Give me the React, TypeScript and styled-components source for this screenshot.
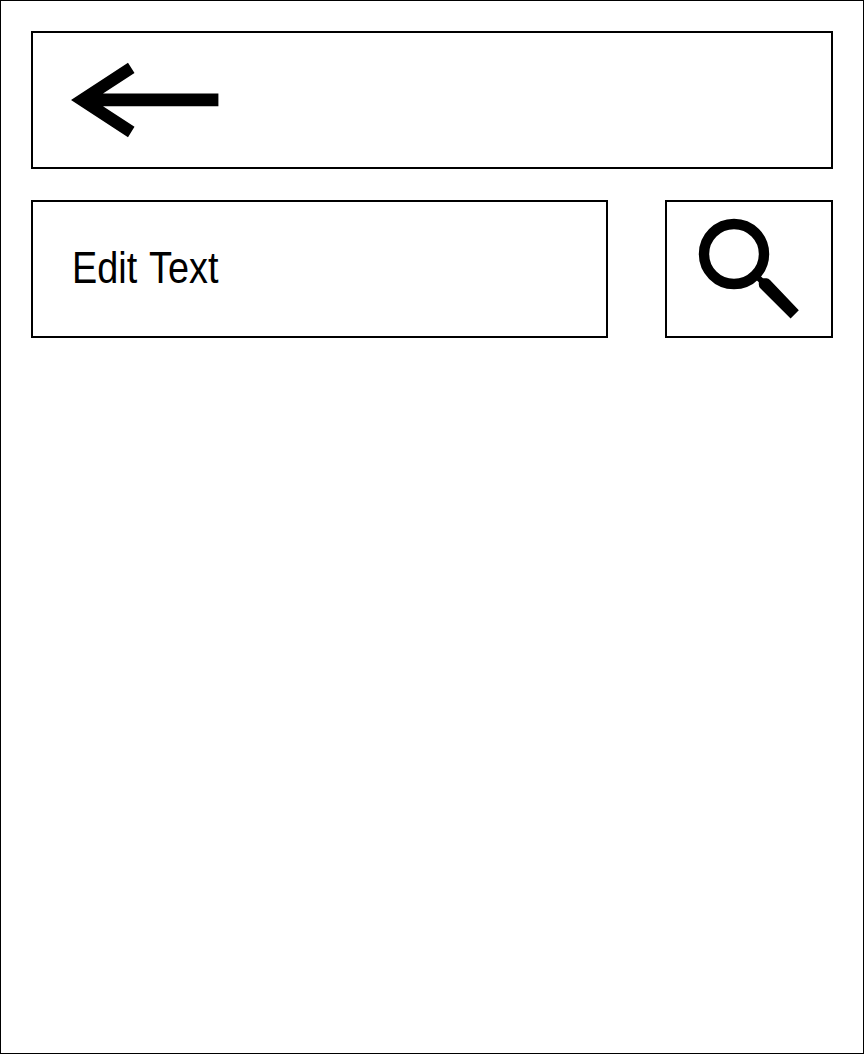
import React from "react";
import styled, { createGlobalStyle } from "styled-components";

const GlobalStyle = createGlobalStyle`
  *, *::before, *::after { box-sizing: border-box; }
  body { margin: 0; background: #fff; color: #000; }
`;

const Screen = styled.main`
  width: 864px;
  height: 1054px;
  border: 1px solid #000;
  padding: 30px;
  display: flex;
  flex-direction: column;
  gap: 31px;
  background: #fff;
`;

const Header = styled.header`
  height: 138px;
  border: 2px solid #000;
  padding-left: 37px;
  display: flex;
  align-items: center;
`;

const SearchRow = styled.div`
  display: grid;
  grid-template-columns: 577px 168px;
  justify-content: space-between;
  height: 138px;
`;

const Field = styled.div`
  border: 2px solid #000;
  padding: 0 0 2px 39px;
  display: flex;
  align-items: center;
`;

const Label = styled.span`
  font: 45px/52px "Liberation Sans", Arial, sans-serif;
  white-space: nowrap;
  word-spacing: 2.5px;
  transform: scaleX(0.84);
  transform-origin: left center;
`;

const IconButton = styled.button`
  border: 2px solid #000;
  border-radius: 0;
  background: none;
  color: inherit;
  padding: 0;
  display: flex;
  align-items: center;
  justify-content: center;
`;

const BackButton = styled(IconButton)`
  border: none;
`;

const Glyph = styled.svg`
  display: block;
  flex: none;
`;

const ArrowIcon = () => (
  <Glyph width="150" height="76" viewBox="70 62 150 76" aria-hidden="true">
    <path d="M71 100 128 62.8 134.5 73 103 93.6H218.4V106.3H103L134.5 126.8 128 137.2Z" />
  </Glyph>
);

const SearchIcon = () => (
  <Glyph width="102" height="102" viewBox="698 218 102 102" aria-hidden="true">
    <circle cx="734" cy="254" r="30" fill="none" stroke="currentColor" strokeWidth="10.4" />
    <path d="M756 271 761 276.4 763 278.3H766.5Q768.5 278.3 770 280L798.8 310.2 790.6 318.5 760.3 288.2Q758.8 286.7 758.8 284.5V282.3L756.7 280.3 753 277Z" />
  </Glyph>
);

export default function App() {
  return (
    <>
      <GlobalStyle />
      <Screen>
        <Header>
          <BackButton aria-label="Back">
            <ArrowIcon />
          </BackButton>
        </Header>
        <SearchRow>
          <Field>
            <Label>Edit Text</Label>
          </Field>
          <IconButton aria-label="Search">
            <SearchIcon />
          </IconButton>
        </SearchRow>
      </Screen>
    </>
  );
}
